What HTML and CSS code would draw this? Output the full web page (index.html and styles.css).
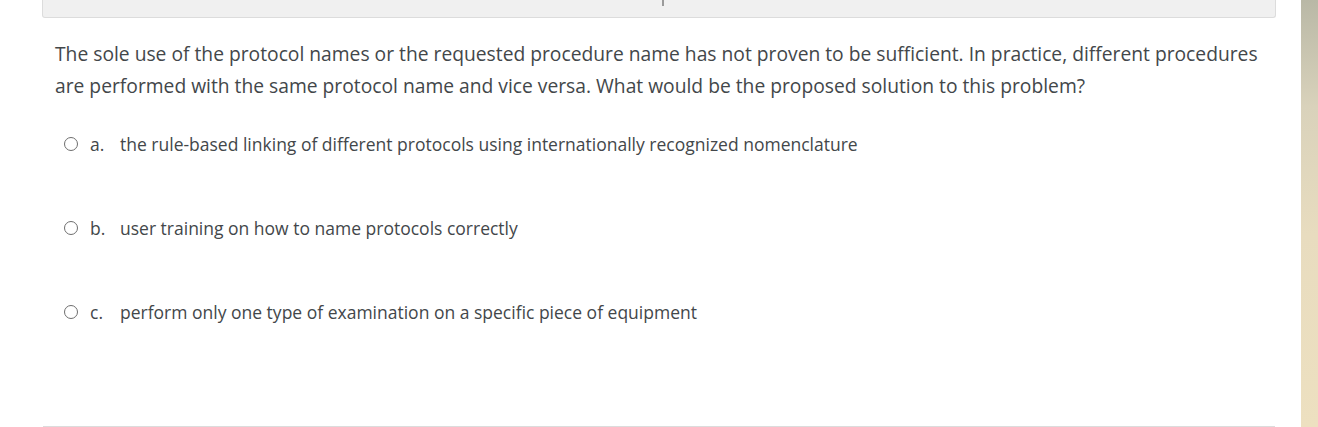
FILE: index.html
```html
<!DOCTYPE html>
<html>
<head>
<meta charset="utf-8">
<link rel="stylesheet" href="styles.css">
</head>
<body>
<div class="page">
  <main class="content">
    <div class="info-box"><span class="cut-glyph"></span></div>
    <div class="question">
      <p class="qtext">The sole use of the protocol names or the requested procedure name has not proven to be sufficient. In practice, different procedures are performed with the same protocol name and vice versa. What would be the proposed solution to this problem?</p>
      <div class="answers">
        <label class="answer"><span class="radio"></span><span class="letter">a.</span><span class="atext">the rule-based linking of different protocols using internationally recognized nomenclature</span></label>
        <label class="answer"><span class="radio"></span><span class="letter">b.</span><span class="atext">user training on how to name protocols correctly</span></label>
        <label class="answer"><span class="radio"></span><span class="letter">c.</span><span class="atext">perform only one type of examination on a specific piece of equipment</span></label>
      </div>
    </div>
    <div class="bottom-rule"></div>
  </main>
  <div class="side-strip"></div>
</div>
</body>
</html>
```
FILE: styles.css
```css
html, body {
  margin: 0;
  padding: 0;
  background: #ffffff;
}
.page {
  display: flex;
  height: 427px;
  overflow: hidden;
  font-family: "Open Sans", "Liberation Sans", sans-serif;
  color: #3f4346;
}
.content {
  margin-left: 42px;
  width: 1234px;
  display: flex;
  flex-direction: column;
}
.info-box {
  height: 17px;
  background: #f0f0f0;
  border: 1px solid #dcdcdc;
  border-top: none;
  border-radius: 0 0 3px 3px;
  display: flex;
  justify-content: center;
}
.cut-glyph {
  width: 2px;
  height: 6px;
  background: #9a9a9a;
  margin-left: 8px;
}
.question {
  flex: 1;
  padding: 20px 0 0 13px;
}
.qtext {
  margin: 0;
  font-size: 19.25px;
  line-height: 32px;
  color: #43474a;
}
.answers {
  display: flex;
  flex-direction: column;
  gap: 60px;
  margin-top: 30px;
}
.answer {
  display: flex;
  align-items: center;
  height: 24px;
  font-size: 17.5px;
  color: #43474a;
}
.radio {
  width: 12px;
  height: 12px;
  border: 1.4px solid #6e6e6e;
  border-radius: 50%;
  margin-left: 9px;
  margin-right: 12px;
  flex: none;
}
.letter {
  width: 30px;
}
.bottom-rule {
  height: 1px;
  margin: 0 1px;
  background: #dcdcdc;
}
.side-strip {
  margin-left: 25px;
  width: 17px;
  background: linear-gradient(to bottom, #b9b8a6 0%, #d9d2bb 25%, #e8dcbf 55%, #ede0c0 100%);
}
```
